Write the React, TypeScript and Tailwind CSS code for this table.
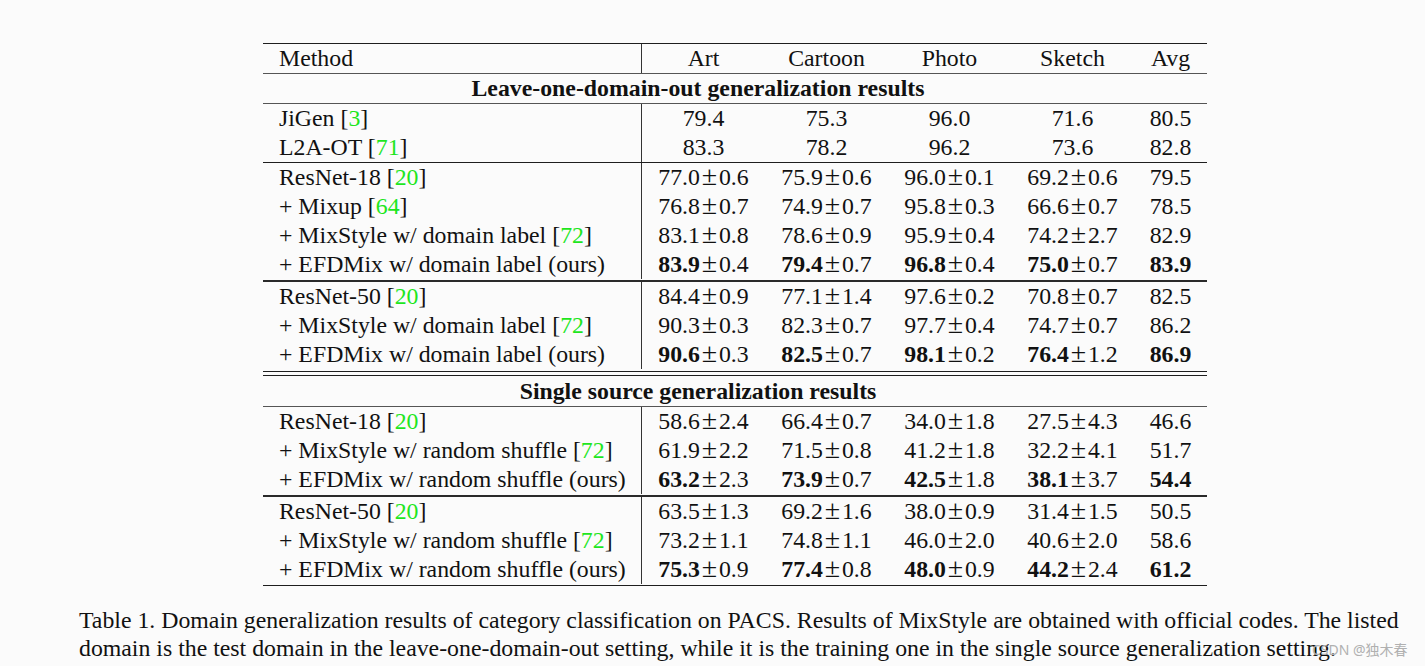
import * as React from "react";

type Cell = { v: string; pm?: string; bold?: boolean };
type Row = { method: string; cite?: string; cells: Cell[] };

const c = (v: string, pm?: string, bold?: boolean): Cell => ({ v, pm, bold });

const leaveOut: Row[][] = [
  [
    { method: "JiGen", cite: "3", cells: [c("79.4"), c("75.3"), c("96.0"), c("71.6"), c("80.5")] },
    { method: "L2A-OT", cite: "71", cells: [c("83.3"), c("78.2"), c("96.2"), c("73.6"), c("82.8")] },
  ],
  [
    { method: "ResNet-18", cite: "20", cells: [c("77.0", "0.6"), c("75.9", "0.6"), c("96.0", "0.1"), c("69.2", "0.6"), c("79.5")] },
    { method: "+ Mixup", cite: "64", cells: [c("76.8", "0.7"), c("74.9", "0.7"), c("95.8", "0.3"), c("66.6", "0.7"), c("78.5")] },
    { method: "+ MixStyle w/ domain label", cite: "72", cells: [c("83.1", "0.8"), c("78.6", "0.9"), c("95.9", "0.4"), c("74.2", "2.7"), c("82.9")] },
    { method: "+ EFDMix w/ domain label (ours)", cells: [c("83.9", "0.4", true), c("79.4", "0.7", true), c("96.8", "0.4", true), c("75.0", "0.7", true), c("83.9", undefined, true)] },
  ],
  [
    { method: "ResNet-50", cite: "20", cells: [c("84.4", "0.9"), c("77.1", "1.4"), c("97.6", "0.2"), c("70.8", "0.7"), c("82.5")] },
    { method: "+ MixStyle w/ domain label", cite: "72", cells: [c("90.3", "0.3"), c("82.3", "0.7"), c("97.7", "0.4"), c("74.7", "0.7"), c("86.2")] },
    { method: "+ EFDMix w/ domain label (ours)", cells: [c("90.6", "0.3", true), c("82.5", "0.7", true), c("98.1", "0.2", true), c("76.4", "1.2", true), c("86.9", undefined, true)] },
  ],
];

const single: Row[][] = [
  [
    { method: "ResNet-18", cite: "20", cells: [c("58.6", "2.4"), c("66.4", "0.7"), c("34.0", "1.8"), c("27.5", "4.3"), c("46.6")] },
    { method: "+ MixStyle w/ random shuffle", cite: "72", cells: [c("61.9", "2.2"), c("71.5", "0.8"), c("41.2", "1.8"), c("32.2", "4.1"), c("51.7")] },
    { method: "+ EFDMix w/ random shuffle (ours)", cells: [c("63.2", "2.3", true), c("73.9", "0.7", true), c("42.5", "1.8", true), c("38.1", "3.7", true), c("54.4", undefined, true)] },
  ],
  [
    { method: "ResNet-50", cite: "20", cells: [c("63.5", "1.3"), c("69.2", "1.6"), c("38.0", "0.9"), c("31.4", "1.5"), c("50.5")] },
    { method: "+ MixStyle w/ random shuffle", cite: "72", cells: [c("73.2", "1.1"), c("74.8", "1.1"), c("46.0", "2.0"), c("40.6", "2.0"), c("58.6")] },
    { method: "+ EFDMix w/ random shuffle (ours)", cells: [c("75.3", "0.9", true), c("77.4", "0.8", true), c("48.0", "0.9", true), c("44.2", "2.4", true), c("61.2", undefined, true)] },
  ],
];

const cols = "grid grid-cols-[379px_123px_123px_123px_123px_73px]";

function Line({ thick, dark }: { thick?: boolean; dark?: boolean }) {
  return <div className={`${thick ? "h-[2px] bg-[#2a2a2a]" : dark ? "h-px bg-[#1e1e1e]" : "h-px bg-[#555]"}`} />;
}

function DataRow({ row }: { row: Row }) {
  return (
    <div className={`${cols} h-[29px] leading-[29px]`}>
      <div className="border-r border-[#333] pl-4 whitespace-nowrap">
        {row.method}
        {row.cite ? (
          <>
            {" "}[<span className="text-[#1ee61e]">{row.cite}</span>]
          </>
        ) : null}
      </div>
      {row.cells.map((cell, i) => (
        <div key={i} className="text-center whitespace-nowrap">
          <span className={cell.bold ? "font-bold" : ""}>{cell.v}</span>
          {cell.pm ? (
            <>
              <span className="inline-block w-[19px] text-center text-[28px] leading-[20px]">±</span>
              <span>{cell.pm}</span>
            </>
          ) : null}
        </div>
      ))}
    </div>
  );
}

function Group({ rows }: { rows: Row[] }) {
  return (
    <>
      {rows.map((r, i) => (
        <DataRow key={i} row={r} />
      ))}
    </>
  );
}

function Title({ text, tall }: { text: string; tall?: boolean }) {
  return (
    <div className={`${tall ? "h-[30px] leading-[31px]" : "h-[29px] leading-[29px]"} flex justify-center pr-[74px] font-bold whitespace-nowrap`}>
      {text}
    </div>
  );
}

export default function App() {
  return (
    <div className="relative min-h-[666px] bg-[#fbfbfb] text-[#111] font-['Liberation_Serif',serif] overflow-hidden">
      <div className="pt-[43px] pl-[263px]">
        <div className="w-[944px] text-[23.8px]">
          <Line dark />
          <div className={`${cols} h-[29px] leading-[29px]`}>
            <div className="border-r border-[#333] pl-4">Method</div>
            <div className="text-center">Art</div>
            <div className="text-center">Cartoon</div>
            <div className="text-center">Photo</div>
            <div className="text-center">Sketch</div>
            <div className="text-center">Avg</div>
          </div>
          <Line />
          <Title text="Leave-one-domain-out generalization results" />
          <Line />
          <Group rows={leaveOut[0]} />
          <Line dark />
          <Group rows={leaveOut[1]} />
          <div className="h-px" />
          <Line thick />
          <Group rows={leaveOut[2]} />
          <div className="h-[2px]" />
          <Line dark />
          <div className="h-[3px]" />
          <Line dark />
          <Title text="Single source generalization results" tall />
          <Line />
          <Group rows={single[0]} />
          <div className="h-px" />
          <Line thick />
          <Group rows={single[1]} />
          <div className="h-px" />
          <Line dark />
        </div>
      </div>

      <div className="mt-[20px] pl-[79px] w-[1397px] text-[23.8px] leading-[28px]">
        <p className="text-justify [text-align-last:justify] whitespace-nowrap">
          Table 1. Domain generalization results of category classification on PACS. Results of MixStyle are obtained with official codes. The listed
        </p>
        <p className="whitespace-nowrap">
          domain is the test domain in the leave-one-domain-out setting, while it is the training one in the single source generalization setting.
        </p>
      </div>

      <div className="absolute left-[1312px] top-[639px] text-[14px] text-[#b0b0b0] font-['Noto_Sans','Noto_Sans_CJK_SC',sans-serif] whitespace-nowrap">
        CSDN @独木春
      </div>
    </div>
  );
}
